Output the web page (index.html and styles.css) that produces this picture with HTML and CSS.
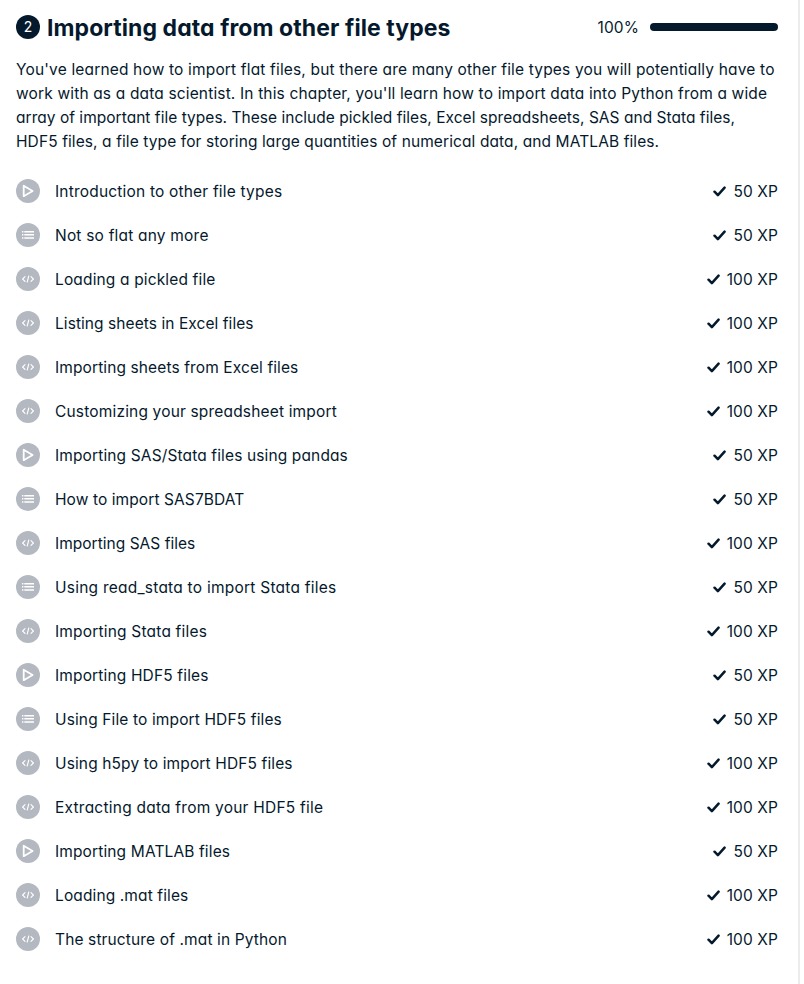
FILE: index.html
```html
<!DOCTYPE html>
<html lang="en">
<head>
<meta charset="utf-8">
<title>Importing data from other file types</title>
<link rel="stylesheet" href="styles.css">
</head>
<body>
<svg class="sprite" aria-hidden="true">
  <symbol id="video" viewBox="0 0 24 24"><path d="M7.7 6.8v10.4L16.6 12z" fill="none" stroke="#fff" stroke-width="1.8" stroke-linejoin="round"/></symbol>
  <symbol id="list" viewBox="0 0 24 24"><path d="M6 8.7h1.4M6 11.8h1.4M6 14.9h1.4M8.3 8.7H18M8.3 11.8H18M8.3 14.9H18" fill="none" stroke="#fff" stroke-width="1.5"/></symbol>
  <symbol id="code" viewBox="0 0 24 24"><path d="M9 9.6 6.6 12 9 14.4M15 9.6l2.4 2.4-2.4 2.4M12.8 9l-1.6 6" fill="none" stroke="#fff" stroke-width="1.1" stroke-linecap="round" stroke-linejoin="round"/></symbol>
  <symbol id="check" viewBox="0 0 12 12"><path d="M1.4 6.2 4.5 9.4 10.7 2.4" fill="none" stroke="#05192d" stroke-width="2.3" stroke-linecap="round" stroke-linejoin="round"/></symbol>
</svg>
<main class="chapter">
  <header class="head">
    <span class="number">2</span>
    <h1 class="title">Importing data from other file types</h1>
    <span class="percent">100%</span>
    <span class="bar"></span>
  </header>
  <p class="description"><span class="l1">You've learned how to import flat files, but there are many other file types you will potentially have to</span><br><span class="l2">work with as a data scientist. In this chapter, you'll learn how to import data into Python from a wide</span><br><span class="l3">array of important file types. These include pickled files, Excel spreadsheets, SAS and Stata files,</span><br><span class="l4">HDF5 files, a file type for storing large quantities of numerical data, and MATLAB files.</span></p>
  <ul class="exercises" id="exercises"></ul>
</main>
<script src="script.js"></script>
</body>
</html>
```
FILE: styles.css
```css
body {
  margin: 0;
  background: #fff;
  color: #05192d;
  font-family: Inter, "Liberation Sans", sans-serif;
  font-feature-settings: "cv11";
  font-size: 15.5px;
  line-height: 24px;
}
.sprite { display: none; }
.chapter {
  box-sizing: border-box;
  width: 800px;
  height: 984px;
  padding: 12px 20px 0 16px;
  border-right: 2px solid #ececec;
}
.head { display: flex; align-items: center; height: 30px; }
.number {
  width: 24px;
  height: 24px;
  border-radius: 50%;
  background: #05192d;
  color: #fff;
  font-size: 14px;
  line-height: 23px;
  text-align: center;
}
.title {
  margin: 0 0 0 7px;
  padding-top: 2px;
  font-size: 23px;
  font-weight: 700;
  letter-spacing: 0.08px;
  line-height: 30px;
  white-space: nowrap;
}
.percent { margin-left: auto; padding-top: 2px; letter-spacing: 0.1px; }
.bar { width: 128px; height: 8px; margin-left: 11px; border-radius: 4px; background: #05192d; }
.description { margin: 16px 0 0; white-space: nowrap; }
.l1 { letter-spacing: 0.165px; }
.l2 { letter-spacing: 0.155px; }
.l3 { letter-spacing: 0.03px; }
.l4 { letter-spacing: 0.1px; }
.exercises { list-style: none; margin: 15px 0 0; padding: 0; }
.exercise { display: flex; align-items: center; height: 44px; }
.icon { width: 24px; height: 24px; border-radius: 50%; background: #b4b9c1; flex: none; }
.name { margin-left: 15px; padding-top: 2px; white-space: nowrap; }
.check { width: 13px; height: 13px; margin-left: auto; }
.xp { margin-left: 7px; padding-top: 2px; letter-spacing: 0.1px; }
```
FILE: script.js
```js
// kind, name, letter spacing in px
const exercises = [
  ["video", "Introduction to other file types", 0.19],
  ["list", "Not so flat any more", 0.2],
  ["code", "Loading a pickled file", 0.15],
  ["code", "Listing sheets in Excel files", 0.07],
  ["code", "Importing sheets from Excel files", 0.11],
  ["code", "Customizing your spreadsheet import", 0.17],
  ["video", "Importing SAS/Stata files using pandas", 0.13],
  ["list", "How to import SAS7BDAT", 0.09],
  ["code", "Importing SAS files", 0.02],
  ["list", "Using read_stata to import Stata files", 0.24],
  ["code", "Importing Stata files", 0.19],
  ["video", "Importing HDF5 files", 0.15],
  ["list", "Using File to import HDF5 files", 0.13],
  ["code", "Using h5py to import HDF5 files", 0.13],
  ["code", "Extracting data from your HDF5 file", 0.23],
  ["video", "Importing MATLAB files", 0.13],
  ["code", "Loading .mat files", 0.12],
  ["code", "The structure of .mat in Python", 0.13]
];
document.getElementById("exercises").innerHTML = exercises.map(([kind, name, spacing]) => `
  <li class="exercise">
    <svg class="icon"><use href="#${kind}"/></svg>
    <span class="name" style="letter-spacing:${spacing}px">${name}</span>
    <svg class="check"><use href="#check"/></svg>
    <span class="xp">${kind === "code" ? 100 : 50} XP</span>
  </li>`).join("");
```
